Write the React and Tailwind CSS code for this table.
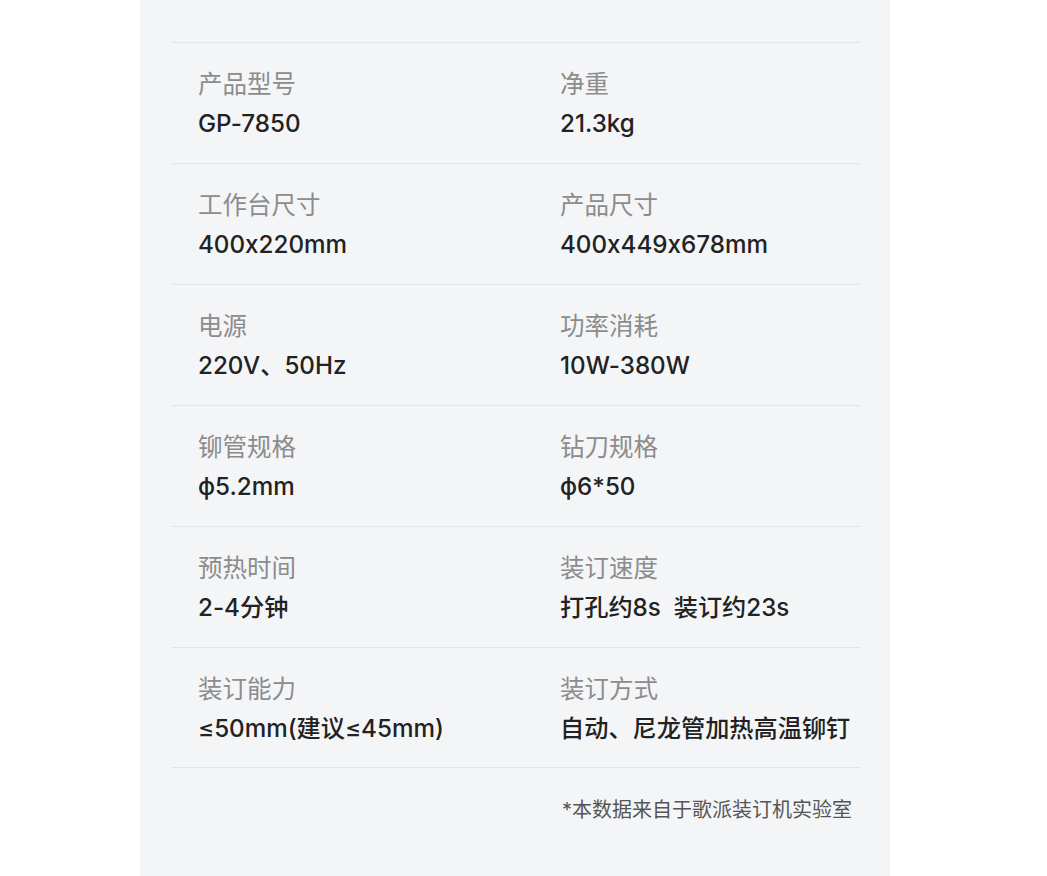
export default function App() {
  const rows = [
    [["产品型号", "GP-7850"], ["净重", "21.3kg"]],
    [["工作台尺寸", "400x220mm"], ["产品尺寸", "400x449x678mm"]],
    [["电源", "220V、50Hz"], ["功率消耗", "10W-380W"]],
    [["铆管规格", "ϕ5.2mm"], ["钻刀规格", "ϕ6*50"]],
    [["预热时间", "2-4分钟"], ["装订速度", "打孔约8s  装订约23s"]],
    [["装订能力", "≤50mm(建议≤45mm)"], ["装订方式", "自动、尼龙管加热高温铆钉"]],
  ];
  const font = {
    fontFamily: 'Inter, "Noto Sans CJK SC", sans-serif',
    fontFeatureSettings: '"calt" 0',
  };
  return (
    <div className="min-h-[876px] w-full bg-white" style={font}>
      <div className="ml-[140px] w-[750px] min-h-[876px] bg-[#f4f5f7] pt-[42px] pl-[32px] pr-[30px]">
        {rows.map((row, i) => (
          <div
            key={i}
            className={`h-[121px] border-t border-[#e4e5e8] grid grid-cols-[362px_1fr] pl-[26px] pt-[25px] ${i === rows.length - 1 ? "border-b" : ""}`}
          >
            {row.map(([label, value], j) => (
              <div key={j} className="flex flex-col gap-[8px]">
                <div className="text-[24.5px] leading-[32px] text-[#8c8c8c]">{label}</div>
                <div className="text-[24.2px] leading-[32px] text-[#222222] font-medium whitespace-pre">{value}</div>
              </div>
            ))}
          </div>
        ))}
        <div className="mt-[28px] pr-[8px] text-right text-[20px] leading-[28px] text-[#555555]">
          *本数据来自于歌派装订机实验室
        </div>
      </div>
    </div>
  );
}
